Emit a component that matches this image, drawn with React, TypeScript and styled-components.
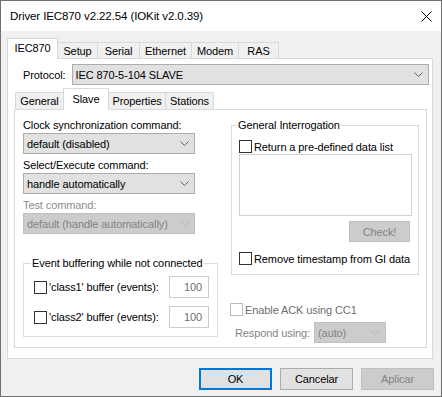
import React from "react";
import styled, { createGlobalStyle } from "styled-components";

const GlobalStyle = createGlobalStyle`
  body {
    margin: 0;
    background: #ffffff;
  }
  * {
    box-sizing: border-box;
  }
`;

const Window = styled.div`
  width: 442px;
  height: 397px;
  border: 1px solid #707070;
  background: #f0f0f0;
  font-family: "Liberation Sans", Arial, sans-serif;
  font-size: 11px;
  letter-spacing: -0.1px;
  color: #000;
  display: flex;
  flex-direction: column;
`;

const TitleBar = styled.div`
  height: 30px;
  flex: none;
  background: #ffffff;
  display: flex;
  align-items: center;
  justify-content: space-between;
  padding: 0 9px 0 9px;
  font-size: 11.5px;
`;

const Client = styled.div`
  flex: 1;
  padding: 7px 8px 0 6px;
  display: flex;
  flex-direction: column;
`;

const TabStrip = styled.div<{ $h: number; $indent?: number }>`
  display: flex;
  align-items: flex-end;
  height: ${(p) => p.$h}px;
  padding-left: ${(p) => p.$indent ?? 0}px;
  position: relative;
  z-index: 1;
`;

const Tab = styled.div<{ $w: number; $h: number; $active?: boolean }>`
  width: ${(p) => p.$w}px;
  height: ${(p) => (p.$active ? p.$h + 1 : p.$h - 4)}px;
  margin-left: -1px;
  margin-bottom: ${(p) => (p.$active ? -1 : 0)}px;
  border: 1px solid #d9d9d9;
  border-bottom: none;
  background: ${(p) => (p.$active ? "#ffffff" : "#f0f0f0")};
  position: relative;
  z-index: ${(p) => (p.$active ? 2 : 1)};
  display: flex;
  align-items: center;
  justify-content: center;
  padding-bottom: ${(p) => (p.$active ? 2 : 0)}px;
  &:first-child {
    margin-left: 0;
  }
`;

const OuterPage = styled.div`
  height: 301px;
  border: 1px solid #d9d9d9;
  background: #ffffff;
  padding: 5px 3px 0 6px;
  display: flex;
  flex-direction: column;
`;

const ProtocolRow = styled.div`
  display: flex;
  align-items: center;
  gap: 6px;
  padding-left: 9px;
`;

const InnerTabs = styled.div`
  margin-top: 3px;
  margin-right: 2px;
  display: flex;
  flex-direction: column;
`;

const InnerPage = styled.div`
  height: 239px;
  border: 1px solid #d9d9d9;
  background: #ffffff;
  padding: 8px 8px 0 8px;
  display: grid;
  grid-template-columns: 195px 188px;
  column-gap: 13px;
  align-items: start;
`;

const Column = styled.div`
  display: flex;
  flex-direction: column;
`;

const Label = styled.div<{ $disabled?: boolean; $gap?: number }>`
  height: 15px;
  line-height: 15px;
  margin-top: ${(p) => p.$gap ?? 0}px;
  color: ${(p) => (p.$disabled ? "#8c8c8c" : "#000")};
  white-space: nowrap;
`;

const ComboBox = styled.div<{ $disabled?: boolean; $w?: number; $grow?: boolean }>`
  height: 21px;
  width: ${(p) => (p.$w ? `${p.$w}px` : "auto")};
  flex: ${(p) => (p.$grow ? 1 : "none")};
  border: 1px solid ${(p) => (p.$disabled ? "#bfbfbf" : "#adadad")};
  background: ${(p) => (p.$disabled ? "#cccccc" : "#e1e1e1")};
  color: ${(p) => (p.$disabled ? "#838383" : "#000")};
  display: flex;
  align-items: center;
  justify-content: space-between;
  padding: 0 5px 0 3px;
  white-space: nowrap;
`;

const Chevron = ({ disabled }: { disabled?: boolean }) => (
  <svg width="9" height="5" viewBox="0 0 9 5">
    <polyline
      points="0.5,0.5 4.5,4.5 8.5,0.5"
      fill="none"
      stroke={disabled ? "#b4b4b4" : "#606060"}
      strokeWidth="1"
    />
  </svg>
);

const Combo = ({
  text,
  disabled,
  w,
  grow,
}: {
  text: string;
  disabled?: boolean;
  w?: number;
  grow?: boolean;
}) => (
  <ComboBox $disabled={disabled} $w={w} $grow={grow}>
    <span>{text}</span>
    <Chevron disabled={disabled} />
  </ComboBox>
);

const Group = styled.fieldset<{ $pad: string; $gap?: number }>`
  margin: ${(p) => p.$gap ?? 0}px 0 0 0;
  min-width: 0;
  border: 1px solid #dcdcdc;
  padding: ${(p) => p.$pad};
  display: flex;
  flex-direction: column;
`;

const Legend = styled.legend<{ $shift: number }>`
  padding: 0 1px;
  margin-left: ${(p) => p.$shift}px;
  line-height: 15px;
  height: 15px;
`;

const CheckRow = styled.div<{ $disabled?: boolean; $gap?: number; $shift?: number }>`
  display: flex;
  align-items: center;
  gap: 2px;
  height: 15px;
  margin-top: ${(p) => p.$gap ?? 0}px;
  margin-left: ${(p) => p.$shift ?? 0}px;
  color: ${(p) => (p.$disabled ? "#6d6d6d" : "#000")};
  white-space: nowrap;
`;

const Box = styled.span<{ $disabled?: boolean }>`
  width: 13px;
  height: 13px;
  flex: none;
  border: 1px solid ${(p) => (p.$disabled ? "#bcbcbc" : "#333333")};
  background: #ffffff;
`;

const BufferRow = styled.div<{ $gap?: number }>`
  display: flex;
  align-items: center;
  margin-top: ${(p) => p.$gap ?? 0}px;
`;

const NumberBox = styled.div`
  margin-left: auto;
  width: 40px;
  height: 22px;
  border: 1px solid #cccccc;
  background: #ffffff;
  color: #6d6d6d;
  display: flex;
  align-items: center;
  justify-content: flex-end;
  padding-right: 6px;
`;

const ListBox = styled.div`
  height: 62px;
  border: 1px solid #d0d0d0;
  background: #ffffff;
`;

const Button = styled.div<{ $default?: boolean; $disabled?: boolean; $w?: number }>`
  width: ${(p) => p.$w ?? 73}px;
  height: ${(p) => (p.$w ? 21 : 22)}px;
  flex: none;
  border: ${(p) =>
    p.$default
      ? "2px solid #0078d7"
      : `1px solid ${p.$disabled ? "#bfbfbf" : "#adadad"}`};
  background: ${(p) => (p.$disabled ? "#cccccc" : "#e1e1e1")};
  color: ${(p) => (p.$disabled ? "#838383" : "#000")};
  display: flex;
  align-items: center;
  justify-content: center;
`;

const CheckButton = styled(Button)`
  align-self: flex-end;
  margin: 5px 2px 0 0;
`;

const RespondRow = styled.div`
  display: flex;
  align-items: center;
  gap: 4px;
  margin-top: 5px;
  padding-left: 4px;
  color: #838383;
`;

const ButtonRow = styled.div`
  display: flex;
  justify-content: flex-end;
  gap: 8px;
  margin-top: 9px;
  margin-right: -1px;
`;

const CloseIcon = () => (
  <svg width="11" height="11" viewBox="0 0 11 11">
    <path d="M0.5,0.5 L10.5,10.5 M10.5,0.5 L0.5,10.5" stroke="#000" strokeWidth="1" />
  </svg>
);

const outerTabs = [
  { name: "IEC870", w: 51 },
  { name: "Setup", w: 41 },
  { name: "Serial", w: 43 },
  { name: "Ethernet", w: 53 },
  { name: "Modem", w: 48 },
  { name: "RAS", w: 41 },
];

const innerTabs = [
  { name: "General", w: 49 },
  { name: "Slave", w: 46 },
  { name: "Properties", w: 58 },
  { name: "Stations", w: 49 },
];

export default function App() {
  return (
    <>
      <GlobalStyle />
      <Window>
        <TitleBar>
          <span>Driver IEC870 v2.22.54 (IOKit v2.0.39)</span>
          <CloseIcon />
        </TitleBar>
        <Client>
          <TabStrip $h={20}>
            {outerTabs.map((t) => (
              <Tab key={t.name} $w={t.w} $h={20} $active={t.name === "IEC870"}>
                {t.name}
              </Tab>
            ))}
          </TabStrip>
          <OuterPage>
            <ProtocolRow>
              <span>Protocol:</span>
              <Combo text="IEC 870-5-104 SLAVE" grow />
            </ProtocolRow>
            <InnerTabs>
              <TabStrip $h={21} $indent={1}>
                {innerTabs.map((t) => (
                  <Tab key={t.name} $w={t.w} $h={21} $active={t.name === "Slave"}>
                    {t.name}
                  </Tab>
                ))}
              </TabStrip>
              <InnerPage>
                <Column>
                  <Label>Clock synchronization command:</Label>
                  <Combo text="default (disabled)" w={172} />
                  <Label $gap={4}>Select/Execute command:</Label>
                  <Combo text="handle automatically" w={172} />
                  <Label $gap={4} $disabled>
                    Test command:
                  </Label>
                  <Combo text="default (handle automatically)" disabled w={172} />
                  <Group $pad="5px 8px 8px 10px" $gap={22}>
                    <Legend $shift={-3}>Event buffering while not connected</Legend>
                    <BufferRow>
                      <CheckRow>
                        <Box />
                        <span>'class1' buffer (events):</span>
                      </CheckRow>
                      <NumberBox>100</NumberBox>
                    </BufferRow>
                    <BufferRow $gap={8}>
                      <CheckRow>
                        <Box />
                        <span>'class2' buffer (events):</span>
                      </CheckRow>
                      <NumberBox>100</NumberBox>
                    </BufferRow>
                  </Group>
                </Column>
                <Column>
                  <Group $pad="6px 6px 8px 7px">
                    <Legend $shift={-2}>General Interrogation</Legend>
                    <CheckRow>
                      <Box />
                      <span>Return a pre-defined data list</span>
                    </CheckRow>
                    <ListBox />
                    <CheckButton $disabled $w={61}>
                      Check!
                    </CheckButton>
                    <CheckRow $gap={9}>
                      <Box />
                      <span>Remove timestamp from GI data</span>
                    </CheckRow>
                  </Group>
                  <CheckRow $disabled $gap={27} $shift={-1}>
                    <Box $disabled />
                    <span>Enable ACK using CC1</span>
                  </CheckRow>
                  <RespondRow>
                    <span>Respond using:</span>
                    <Combo text="(auto)" disabled w={72} />
                  </RespondRow>
                </Column>
              </InnerPage>
            </InnerTabs>
          </OuterPage>
          <ButtonRow>
            <Button $default>OK</Button>
            <Button>Cancelar</Button>
            <Button $disabled>Aplicar</Button>
          </ButtonRow>
        </Client>
      </Window>
    </>
  );
}
